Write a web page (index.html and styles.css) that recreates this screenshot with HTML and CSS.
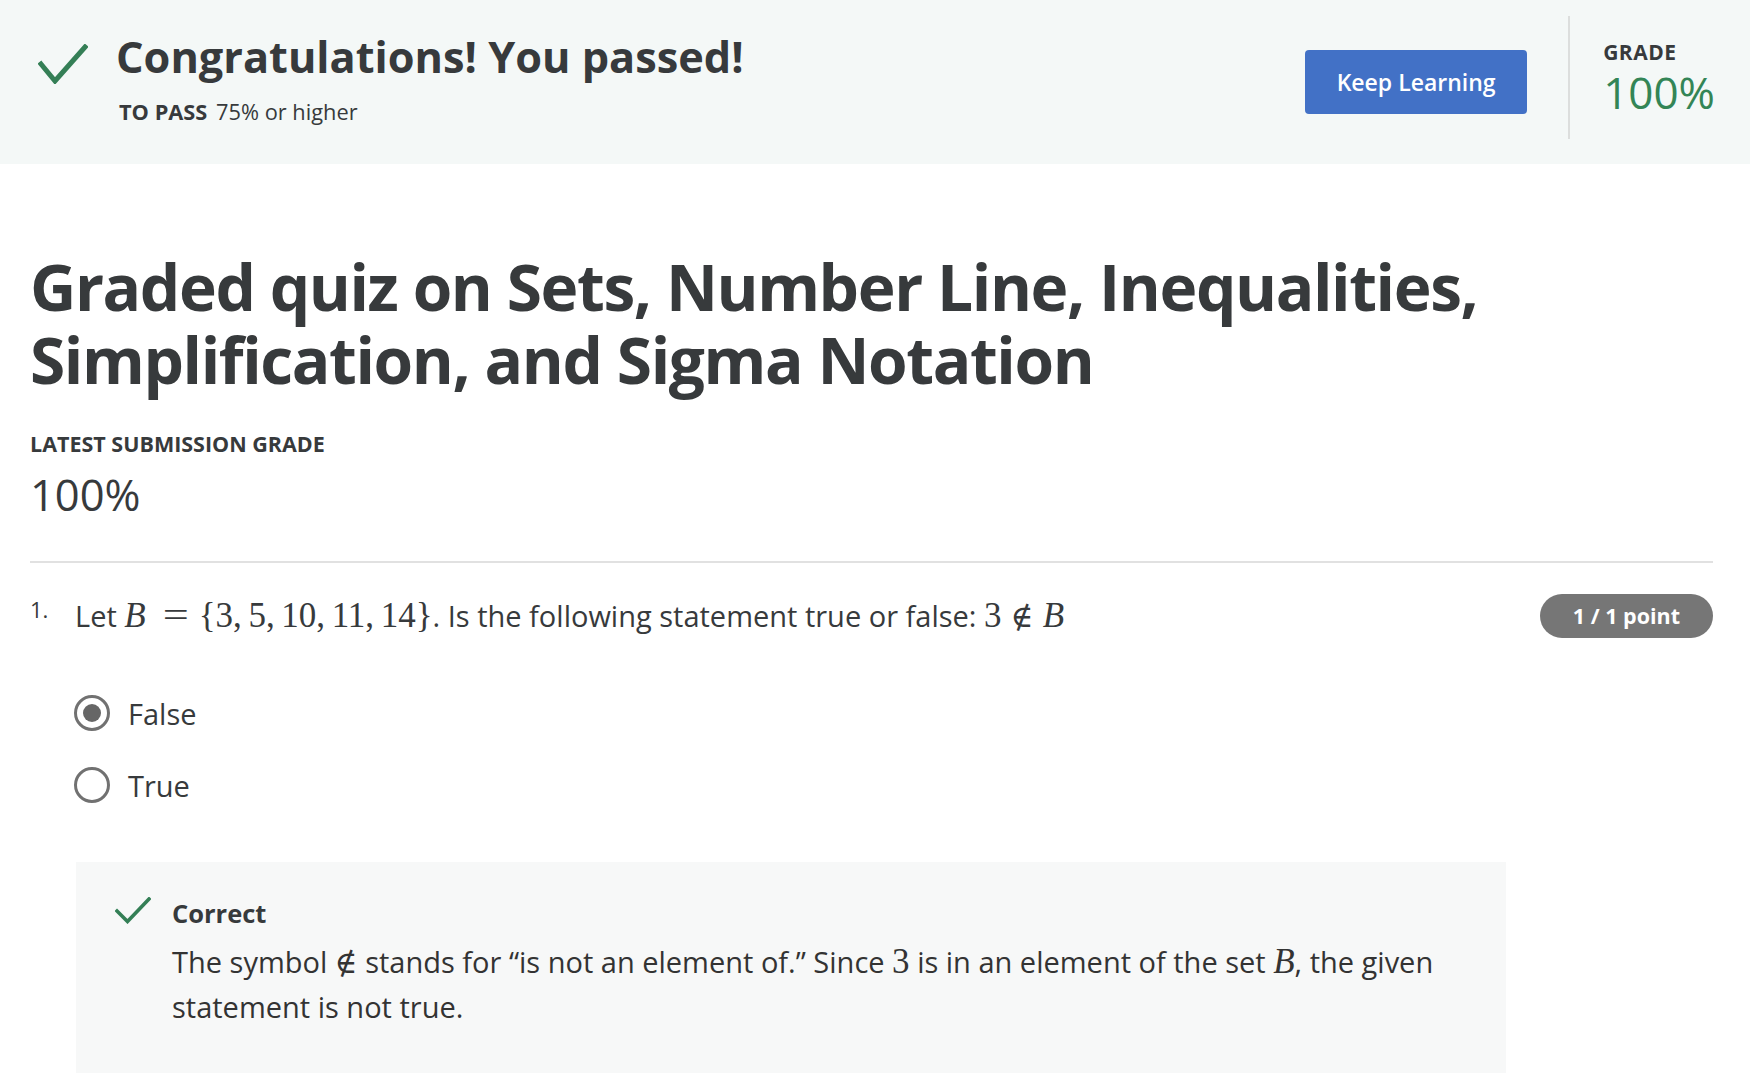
FILE: index.html
```html
<!DOCTYPE html>
<html lang="en">
<head>
<meta charset="utf-8">
<title>Graded quiz</title>
<link rel="stylesheet" href="styles.css">
</head>
<body>
<header class="banner">
  <div class="banner-left">
    <svg class="check-lg" viewBox="0 0 50 40"><polyline points="3,20 17,37 47,3"/></svg>
    <div class="banner-text">
      <div class="passed">Congratulations! You passed!</div>
      <div class="topass"><span class="topass-label">TO PASS</span> 75% or higher</div>
    </div>
  </div>
  <div class="banner-right">
    <button class="keep">Keep Learning</button>
    <div class="vdivider"></div>
    <div class="grade">
      <div class="grade-label">GRADE</div>
      <div class="grade-value">100%</div>
    </div>
  </div>
</header>

<main class="content">
  <h1 class="title">Graded quiz on Sets, Number Line, Inequalities, Simplification, and Sigma Notation</h1>
  <div class="latest-label">LATEST SUBMISSION GRADE</div>
  <div class="latest-value">100%</div>
  <div class="rule"></div>

  <section class="question">
    <div class="q-head">
      <span class="q-num">1.</span>
      <div class="q-text">Let <span class="m"><i>B</i><span class="rel eq">=</span>{3,<span class="sp"></span>5,<span class="sp"></span>10,<span class="sp"></span>11,<span class="sp"></span>14}</span>. Is the following statement true or false: <span class="m">3<span class="rel notin">∉</span><i>B</i></span></div>
      <span class="badge">1 / 1 point</span>
    </div>

    <div class="options">
      <div class="option"><span class="radio checked"></span><span class="opt-label">False</span></div>
      <div class="option"><span class="radio"></span><span class="opt-label">True</span></div>
    </div>

    <div class="feedback">
      <svg class="check-sm" viewBox="0 0 36 27"><polyline points="2,14 12.5,24.5 34,2"/></svg>
      <div class="fb-body">
        <div class="fb-title">Correct</div>
        <div class="fb-text">The symbol <span class="m"><span class="notin">∉</span></span> stands for “is not an element of.” Since <span class="m">3</span> is in an element of the set <span class="m"><i>B</i></span>, the given <span class="fb-tail">statement is not true.</span></div>
      </div>
    </div>
  </section>
</main>
</body>
</html>
```

FILE: styles.css
```css
* { box-sizing: border-box; }

body {
  margin: 0;
  font-family: "Open Sans", "Noto Sans", sans-serif;
  color: #373a3c;
  background: #ffffff;
}

/* ---------- banner ---------- */
.banner {
  display: flex;
  justify-content: space-between;
  align-items: flex-start;
  height: 164px;
  padding: 0 35px 0 38px;
  background: #f4f8f7;
}

.banner-left {
  display: flex;
  align-items: flex-start;
  padding-top: 31px;
}

.check-lg {
  width: 50px;
  height: 40px;
  margin-top: 13px;
  margin-right: 28px;
  fill: none;
  stroke: #347f56;
  stroke-width: 5;
  stroke-linecap: square;
}

.passed {
  font-size: 43.3px;
  line-height: 52px;
  font-weight: 700;
  color: #373a3c;
}

.topass {
  margin-top: 16px;
  padding-left: 3px;
  font-size: 21.8px;
  line-height: 26px;
  color: #373a3c;
}

.topass-label {
  font-weight: 700;
  margin-right: 3px;
}

.banner-right {
  display: flex;
  align-items: flex-start;
}

.keep {
  margin-top: 50px;
  width: 222px;
  height: 64px;
  border: none;
  border-radius: 4px;
  background: #4271c6;
  color: #ffffff;
  font-family: "Open Sans", sans-serif;
  font-size: 23px;
  font-weight: 600;
  cursor: pointer;
}

.vdivider {
  margin-top: 16px;
  margin-left: 41px;
  width: 2px;
  height: 123px;
  background: #dcdedd;
}

.grade {
  margin-left: 33px;
  padding-top: 39px;
}

.grade-label {
  font-size: 21px;
  line-height: 26px;
  font-weight: 700;
  letter-spacing: 0.5px;
  color: #373a3c;
}

.grade-value {
  margin-top: 3px;
  font-size: 44px;
  line-height: 48px;
  font-weight: 400;
  color: #338556;
}

/* ---------- content ---------- */
.content {
  padding: 0 37px 0 30px;
}

.title {
  margin: 86px 0 0;
  font-size: 64px;
  line-height: 73px;
  font-weight: 700;
  letter-spacing: -1.4px;
  color: #373a3c;
}

.latest-label {
  margin-top: 34px;
  font-size: 21.5px;
  line-height: 28px;
  font-weight: 700;
}

.latest-value {
  margin-top: 11px;
  font-size: 43.5px;
  line-height: 52px;
  font-weight: 400;
}

.rule {
  margin-top: 40px;
  height: 2px;
  background: #e1e1e1;
}

/* ---------- question ---------- */
.q-head {
  display: flex;
  align-items: flex-start;
  margin-top: 33px;
}

.q-num {
  flex: 0 0 45px;
  padding-top: 1px;
  font-size: 22px;
  line-height: 24px;
}

.q-text {
  flex: 1;
  font-size: 29px;
  line-height: 40px;
  color: #373a3c;
}

.m {
  font-family: "Liberation Serif", "DejaVu Serif", serif;
  font-size: 35px;
  line-height: 0;
}

.m * {
  line-height: 0;
}

.m i {
  font-style: italic;
}

.rel {
  margin: 0 0.3em;
}

.eq {
  display: inline-block;
  margin: 0 0.36em 0 0.59em;
  transform: scaleX(1.32);
}

.notin {
  font-family: "DejaVu Serif", serif;
  font-weight: 300;
  font-size: 0.88em;
}

.sp {
  display: inline-block;
  width: 0.19em;
}

.badge {
  margin-top: -2px;
  height: 44px;
  padding: 0 33px;
  border-radius: 22px;
  background: #767676;
  color: #ffffff;
  font-size: 21.5px;
  line-height: 44px;
  font-weight: 700;
  white-space: nowrap;
}

.options {
  margin-top: 39px;
  padding-left: 44px;
}

.option {
  display: flex;
  align-items: center;
  gap: 18px;
  height: 72px;
  font-size: 29px;
}

.radio {
  width: 36px;
  height: 36px;
  border: 3px solid #717171;
  border-radius: 50%;
  display: flex;
  align-items: center;
  justify-content: center;
}

.radio.checked::after {
  content: "";
  width: 18px;
  height: 18px;
  border-radius: 50%;
  background: #666666;
}

/* ---------- feedback ---------- */
.feedback {
  display: flex;
  align-items: flex-start;
  gap: 21px;
  width: 1430px;
  margin: 41px 0 0 46px;
  padding: 35px 48px 44px 39px;
  background: #f7f8f8;
}

.check-sm {
  flex: 0 0 36px;
  width: 36px;
  height: 27px;
  fill: none;
  stroke: #347f56;
  stroke-width: 3.6;
  stroke-linecap: square;
}

.fb-title {
  font-size: 25.5px;
  line-height: 32px;
  font-weight: 700;
}

.fb-text {
  margin-top: 10px;
  font-size: 29px;
  line-height: 45px;
  color: #333333;
}

.fb-tail {
  white-space: nowrap;
}
```
